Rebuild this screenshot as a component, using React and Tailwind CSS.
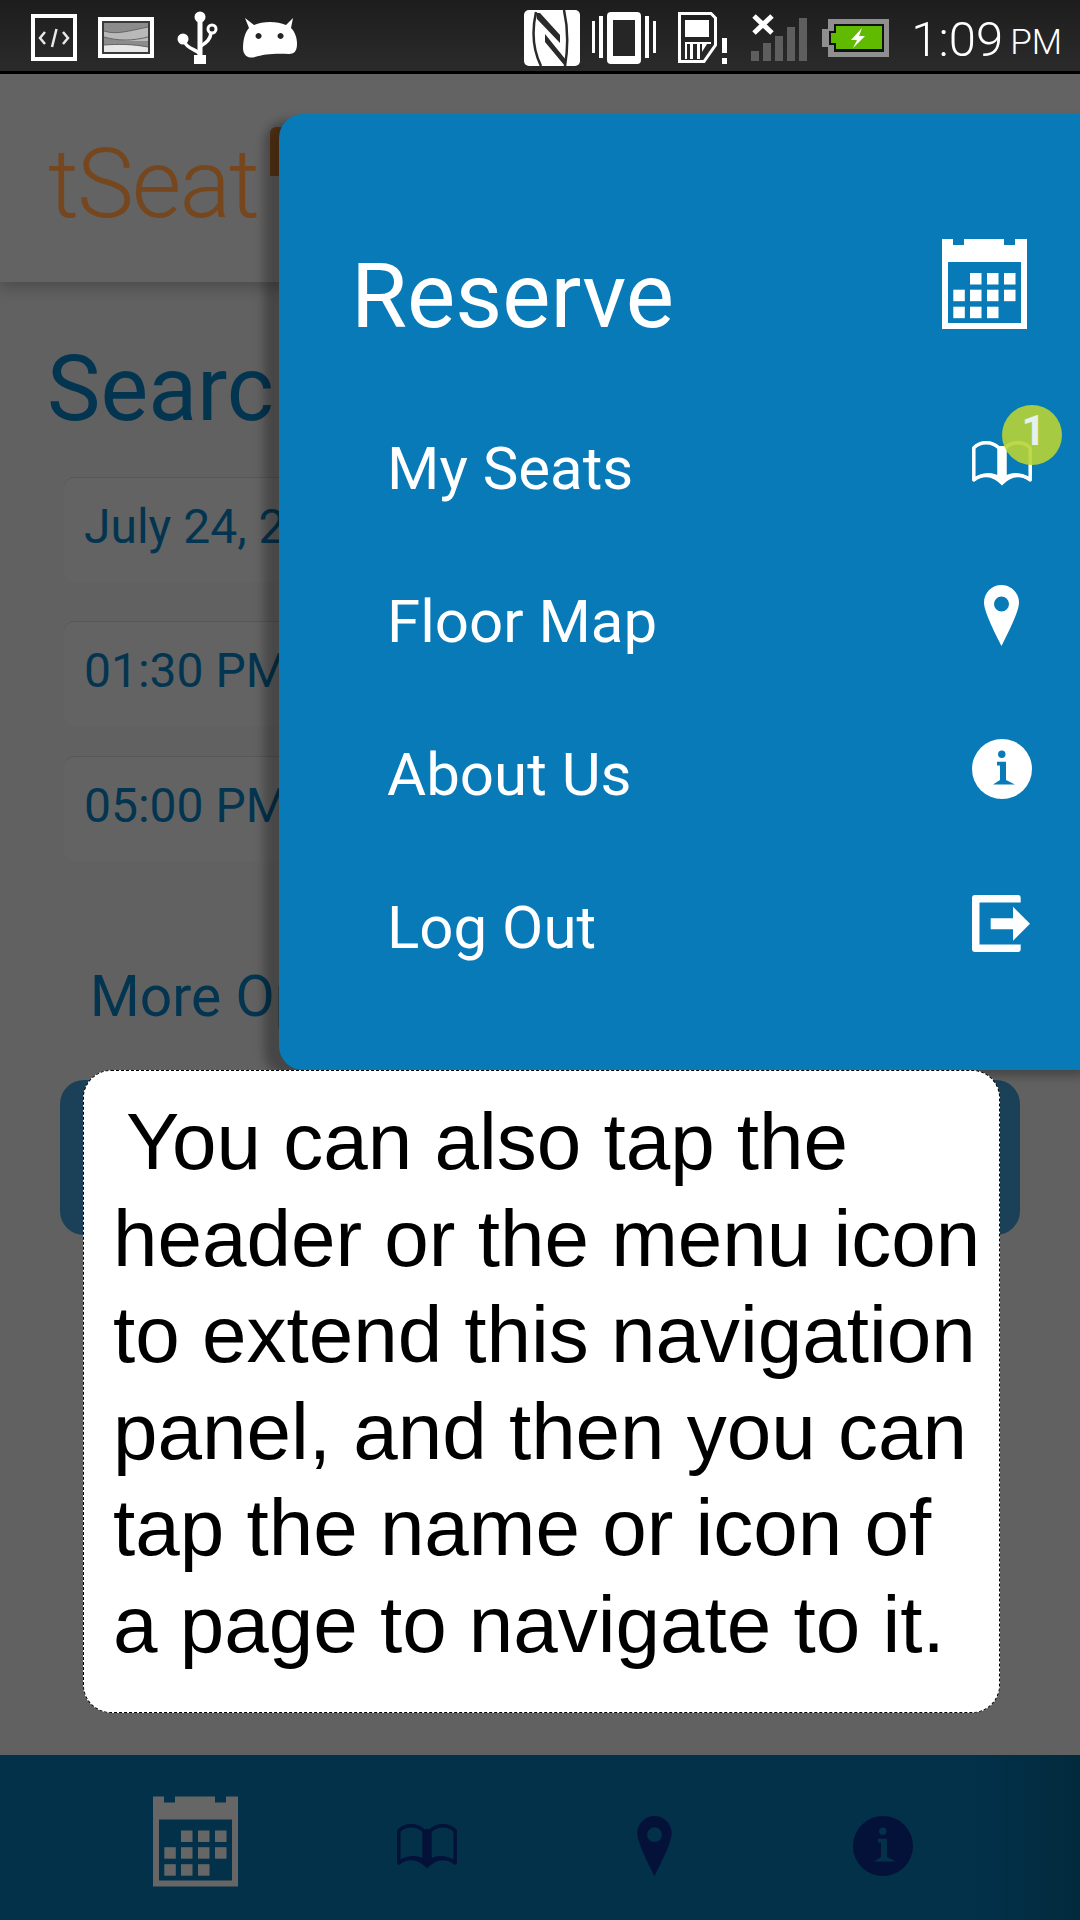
import React from 'react';

const ROBOTO = "font-['Roboto',sans-serif]";

function CalendarIcon({ className, color }) {
  const cells = [
    [28, 34], [45, 34], [62, 34],
    [11.3, 50.7], [28, 50.7], [45, 50.7], [62, 50.7],
    [11.3, 67.7], [28, 67.7], [45, 67.7],
  ];
  return (
    <svg viewBox="0 0 85 90" className={className}>
      <path
        fill={color}
        fillRule="evenodd"
        d="M0 0H11V6H22V0H62V6H73V0H85V90H0ZM6 23V84H79V23Z"
      />
      {cells.map(([x, y]) => (
        <rect key={`${x}-${y}`} x={x} y={y} width="11.5" height="11.5" fill={color} />
      ))}
    </svg>
  );
}

function BookIcon({ className, color }) {
  return (
    <svg viewBox="0 0 60 46" className={className} fill="none" stroke={color}>
      <path
        strokeWidth="3.5"
        strokeLinejoin="round"
        d="M1.8 40V8C8 1 20 1 27 8V38C20 33 9 34 1.8 40ZM58.2 40V8C52 1 40 1 33 8V38C40 33 51 34 58.2 40Z"
      />
      <path fill={color} stroke="none" d="M27 6H33V40L30 45 25 40H27Z" />
      <path strokeWidth="3.5" d="M1.8 40C9 34 20 33 30 43 40 33 51 34 58.2 40" />
    </svg>
  );
}

function PinIcon({ className, color }) {
  return (
    <svg viewBox="0 0 35 61" className={className}>
      <path
        fill={color}
        fillRule="evenodd"
        d="M17.5 0C7.8 0 0 7.8 0 17.5 0 27 12 50 17.5 61 23 50 35 27 35 17.5 35 7.8 27 0 17.5 0ZM17.5 11.5A7.5 7.5 0 1 1 17.5 26.5 7.5 7.5 0 1 1 17.5 11.5Z"
      />
    </svg>
  );
}

function InfoIcon({ className, color, glyph }) {
  return (
    <svg viewBox="0 0 60 60" className={className}>
      <circle cx="30" cy="30" r="30" fill={color} />
      <circle cx="29.8" cy="15.3" r="3.7" fill={glyph} />
      <path fill={glyph} d="M25 22.7H34V41L43 45.5H21L28 41V26.5H25Z" />
    </svg>
  );
}

function LogoutIcon({ className, color }) {
  return (
    <svg viewBox="0 0 58 57" className={className}>
      <path
        fill={color}
        d="M3 0H46Q48.7 0 48.7 3V7.5H7.5V49.5H48.7V54Q48.7 57 46 57H3Q0 57 0 54V3Q0 0 3 0Z"
      />
      <path fill={color} d="M18.7 23.3H41V11.7L58 28.7 41 45.7V34.3H18.7Z" />
    </svg>
  );
}

function StatusIcons() {
  return (
    <>
      <div className="flex items-center">
        <svg viewBox="0 0 46 47" className="ml-[31px] h-[47px] w-[46px]">
          <rect x="2" y="2" width="42" height="43" fill="none" stroke="#fff" strokeWidth="4" />
          <path d="M14 18L9 24 14 30M32 18L37 24 32 30M25.5 15L21 33" fill="none" stroke="#e8e8e8" strokeWidth="2.5" />
        </svg>
        <svg viewBox="0 0 56 41" className="ml-[21px] h-[41px] w-[56px]">
          <rect width="56" height="41" fill="#fff" />
          <rect x="4" y="4" width="48" height="33" fill="#3a3a3a" />
          <rect x="6" y="6" width="44" height="29" fill="#8c8c8c" />
          <path d="M6 14C18 18 30 14 50 10V24C34 24 20 24 6 20Z" fill="#b9b9b9" />
          <path d="M6 28C20 27 34 27 50 30V35H6Z" fill="#e6e6e6" />
          <path d="M6 14C18 18 30 14 50 10M6 20C20 24 34 24 50 20M6 28C20 27 34 27 50 30" fill="none" stroke="#666" strokeWidth="1" />
        </svg>
        <svg viewBox="0 0 42 53" className="ml-[23px] h-[53px] w-[42px]">
          <circle cx="23" cy="6" r="5.5" fill="#fff" />
          <rect x="20.5" y="6" width="5" height="40" fill="#fff" />
          <rect x="17" y="44" width="12" height="9" fill="#fff" />
          <circle cx="6" cy="28" r="5.5" fill="#fff" />
          <circle cx="35" cy="18" r="4" fill="none" stroke="#fff" strokeWidth="3" />
          <path d="M7 30C10 38 18 38 22 42M34 22C33 30 28 32 24 35" fill="none" stroke="#fff" strokeWidth="3.5" />
        </svg>
        <svg viewBox="0 0 54 40" className="ml-[24px] h-[40px] w-[54px]">
          <path
            fill="#fff"
            fillRule="evenodd"
            d="M2 0L11 7C20 3 34 3 43 7L50 0 48 10C52 14 54 20 54 26 54 32 52 36 46 36 34 35 20 36 12 39 6 41 0 38 0 30 0 22 2 14 6 10ZM15.5 15A3 3 0 1 0 15.6 15ZM37.5 15A3 3 0 1 0 37.6 15Z"
          />
        </svg>
      </div>
      <div className="flex items-center">
        <svg viewBox="0 0 56 56" className="h-[56px] w-[56px]">
          <rect width="56" height="56" rx="5" fill="#fff" />
          <path d="M12 2C8 20 9 40 17 56M40 0C44 18 44 38 41 56" fill="none" stroke="#2a2a2a" strokeWidth="2.5" />
          <path d="M12 3H16L36 25V33L13 9ZM21 24L42 50 41 56 21 32Z" fill="#2a2a2a" />
        </svg>
        <svg viewBox="0 0 64 52" className="ml-[12px] h-[52px] w-[64px]">
          <rect x="0" y="9" width="3" height="32" fill="#fff" />
          <rect x="7" y="4" width="4" height="42" fill="#fff" />
          <rect x="53" y="4" width="4" height="42" fill="#fff" />
          <rect x="61" y="9" width="3" height="32" fill="#fff" />
          <rect x="15" y="0" width="34" height="52" rx="4" fill="#fff" />
          <rect x="21" y="8" width="22" height="36" fill="#262626" />
        </svg>
        <svg viewBox="0 0 50 52" className="ml-[22px] h-[52px] w-[50px]">
          <path d="M1.5 1.5H33L37.5 6V33L26 49.5H1.5Z" fill="none" stroke="#fff" strokeWidth="3" />
          <rect x="7" y="8" width="24" height="17" fill="#fff" />
          <path d="M7 30H33V32H29L24 40V32H22V47H19V32H15V47H12V32H9V47H7Z" fill="#fff" />
          <rect x="44" y="26" width="5" height="15" fill="#fff" />
          <rect x="44" y="46" width="5" height="6" fill="#fff" />
        </svg>
        <svg viewBox="0 0 56 48" className="ml-[23px] h-[48px] w-[56px]">
          <rect x="0" y="37" width="8" height="10" fill="#5e5e5e" />
          <rect x="12" y="29" width="8" height="18" fill="#5e5e5e" />
          <rect x="24" y="22" width="8" height="25" fill="#5e5e5e" />
          <rect x="36" y="13" width="8" height="34" fill="#5e5e5e" />
          <rect x="48" y="4" width="8" height="43" fill="#5e5e5e" />
          <path d="M3 2L21 19M21 2L3 19" stroke="#fff" strokeWidth="5" />
        </svg>
        <svg viewBox="0 0 67 38" className="ml-[15px] h-[38px] w-[67px]">
          <path d="M6 0H67V38H6V28H0V10H6Z" fill="#8f8f8f" />
          <path d="M12 5H62V33H12V26H7V12H12Z" fill="#111" />
          <path d="M14 7H60V30H14V24H9V14H14Z" fill="#5fba00" />
          <path d="M40 9L29 21H35L31 29 43 17H37Z" fill="#fff" />
        </svg>
        <span className={`${ROBOTO} mt-[4px] ml-[22px] text-[49px] leading-none font-light text-white`}>1:09</span>
        <span className={`${ROBOTO} mt-[10px] mr-[18px] ml-[7px] text-[35px] leading-none font-light text-white`}>PM</span>
      </div>
    </>
  );
}

function DimField({ label, className }) {
  return (
    <div className={`mx-[64px] flex h-[105px] items-center rounded-[10px] border-t border-[#575757] bg-[#636363] pb-[6px] pl-[20px] text-[48px] leading-none text-[#033550] ${className}`}>
      {label}
    </div>
  );
}

const menuRows = [
  { name: 'Floor Map', icon: <PinIcon color="#fff" className="mr-[13px] mb-[12px] h-[61px] w-[35px]" /> },
  { name: 'About Us', icon: <InfoIcon color="#fff" glyph="#077ab7" className="mb-[12px] h-[60px] w-[60px]" /> },
  { name: 'Log Out', icon: <LogoutIcon color="#fff" className="mr-[2px] mb-[9px] h-[57px] w-[58px]" /> },
];

export default function App() {
  return (
    <div className={`${ROBOTO} relative flex h-[1920px] w-[1080px] flex-col overflow-hidden bg-[#616161]`}>
      {/* status bar */}
      <div className="flex h-[74px] items-center justify-between border-b-[3px] border-black bg-gradient-to-b from-[#1d1d1d] to-[#2b2b2b] pt-[4px]">
        <StatusIcons />
      </div>

      {/* dimmed app header */}
      <div className="relative flex h-[208px] items-center bg-[#636363] pt-[12px] pl-[48px] shadow-[0_6px_14px_rgba(0,0,0,0.22)]">
        <span className="text-[96px] leading-none font-light tracking-[-2px] text-[#76471f]">tSeat</span>
        <div className="absolute top-[53px] left-[270px] h-[49px] w-[20px] rounded-tl-[6px] bg-[#5e3815]" />
      </div>

      {/* dimmed search form */}
      <div className="flex flex-1 flex-col">
        <h1 className="mt-[55px] ml-[47px] text-[90px] leading-[106px] font-normal text-[#033550]">Search</h1>
        <DimField label="July 24, 2014" className="mt-[34px]" />
        <DimField label="01:30 PM" className="mt-[39px]" />
        <DimField label="05:00 PM" className="mt-[30px]" />
        <p className="mt-[107px] ml-[90px] text-[57px] leading-none text-[#033550]">More Options</p>
        <div className="mx-[60px] mt-[55px] h-[155px] rounded-[24px] bg-[#1a4157]" />
      </div>

      {/* dimmed bottom nav */}
      <div className="flex h-[165px] items-start bg-gradient-to-r from-[#03314a] via-[#03314a] via-90% to-[#022a3d]">
        <CalendarIcon color="#666666" className="mt-[41px] ml-[153px] h-[91px] w-[85px]" />
        <BookIcon color="#04123a" className="mt-[68px] ml-[159px] h-[46px] w-[60px]" />
        <PinIcon color="#04123a" className="mt-[61px] ml-[180px] h-[60px] w-[35px]" />
        <InfoIcon color="#04123a" glyph="#03314a" className="mt-[61px] ml-[181px] h-[60px] w-[60px]" />
      </div>

      {/* navigation panel */}
      <div className="absolute top-[114px] left-[279px] w-[820px] rounded-l-[24px] bg-[#077ab7] pt-[125px] pr-[67px] pb-[66px] text-white shadow-[-15px_6px_10px_rgba(0,0,0,0.28)]">
        <div className="flex h-[90px] items-start justify-between pl-[72px]">
          <span className="mt-[12px] text-[91px] leading-none">Reserve</span>
          <CalendarIcon color="#ffffff" className="mr-[5px] h-[90px] w-[85px]" />
        </div>
        <div className="mt-[63px] ml-[108px]">
          <div className="flex h-[153px] items-center justify-between text-[60px] leading-none">
            <span>My Seats</span>
            <div className="relative mb-[12px]">
              <BookIcon color="#ffffff" className="h-[46px] w-[60px]" />
              <div className="absolute top-[-35px] left-[30px] flex h-[60px] w-[60px] justify-center rounded-full bg-[#b8d435]/90 pt-[3px] pl-[3px] text-[42px] leading-[46px] font-bold text-[#e6f0ee]">1</div>
            </div>
          </div>
          {menuRows.map((row) => (
            <div key={row.name} className="flex h-[153px] items-center justify-between text-[60px] leading-none">
              <span>{row.name}</span>
              {row.icon}
            </div>
          ))}
        </div>
      </div>

      {/* help popup */}
      <div className="absolute top-[1070px] left-[83px] h-[643px] w-[917px] rounded-[28px] border border-dashed border-black bg-white pt-[23px] pl-[29px] font-['Liberation_Sans',sans-serif] text-[80px] leading-[96.5px] text-black">
        <div className="pl-[13px]">You can also tap the</div>
        <div>header or the menu icon</div>
        <div>to extend this navigation</div>
        <div>panel, and then you can</div>
        <div>tap the name or icon of</div>
        <div>a page to navigate to it.</div>
      </div>
    </div>
  );
}
